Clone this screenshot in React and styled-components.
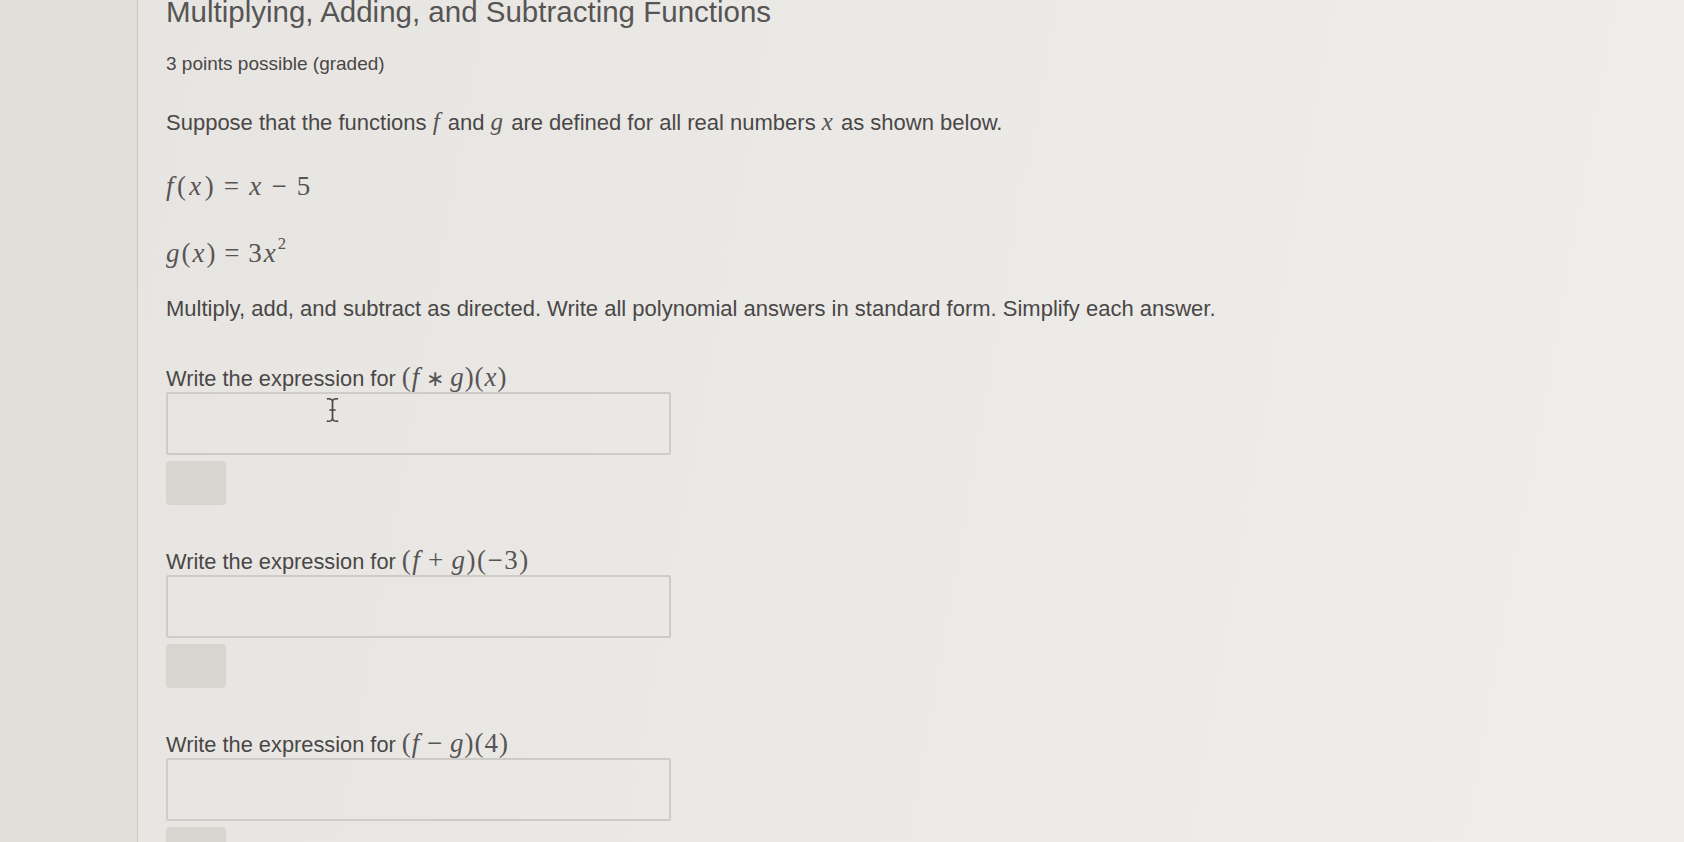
import React from "react";
import styled, { createGlobalStyle } from "styled-components";

const GlobalStyle = createGlobalStyle`
  html, body {
    margin: 0;
    padding: 0;
    height: 100%;
    overflow: hidden;
  }
  body {
    background: #e0ded9;
  }
`;

const Page = styled.div`
  display: flex;
  width: 1684px;
  height: 842px;
  overflow: hidden;
  font-family: "Liberation Sans", Arial, sans-serif;
`;

const Sidebar = styled.div`
  width: 137px;
  flex-shrink: 0;
  background: #e1dfda;
  border-right: 1px solid #cbc8c3;
`;

const Main = styled.div`
  flex: 1;
  padding-left: 28px;
  background: linear-gradient(100deg, #e7e5e1 0%, #eae9e6 45%, #efeeec 100%);
  color: #4a4747;
`;

const Title = styled.h1`
  margin: -3px 0 0;
  font-size: 29.5px;
  line-height: 30px;
  font-weight: 400;
  color: #575454;
  white-space: nowrap;
`;

const Points = styled.div`
  margin-top: 25px;
  font-size: 19px;
  line-height: 24px;
`;

const Para = styled.p`
  margin: ${(p) => p.$gap}px 0 0;
  font-size: 22px;
  line-height: 24px;
  white-space: nowrap;
`;

const Formula = styled.div`
  margin-top: ${(p) => p.$gap}px;
  height: 28px;
  line-height: 28px;
`;

const Math = styled.span`
  font-family: "Liberation Serif", "Times New Roman", serif;
  font-size: ${(p) => p.$size || 25}px;
  letter-spacing: ${(p) => p.$spacing ?? 2}px;
  color: #575454;
  white-space: nowrap;
`;

const V = styled.i`
  font-style: italic;
`;

const Op = styled.span`
  margin: 0 0.25em;
  font-size: ${(p) => (p.$small ? "0.8em" : "1em")};
`;

const Sup = styled.sup`
  font-size: 0.62em;
  vertical-align: 0.75em;
  line-height: 0;
`;

const Question = styled.div`
  margin-top: ${(p) => p.$gap}px;
  display: flex;
  flex-direction: column;
  align-items: flex-start;
`;

const Label = styled.div`
  height: 28px;
  line-height: 28px;
  font-size: 21.8px;
  white-space: nowrap;
`;

const FieldWrap = styled.div`
  position: relative;
  margin-top: 1px;
`;

const Field = styled.input`
  display: block;
  box-sizing: border-box;
  width: 505px;
  height: 63px;
  margin: 0;
  border: 2px solid #cfccc7;
  border-radius: 2px;
  background: transparent;
  outline: none;
`;

const Cursor = styled.svg`
  position: absolute;
  left: 159px;
  top: 5px;
  pointer-events: none;
`;

const Submit = styled.button`
  margin-top: 6px;
  width: 60px;
  height: 44px;
  border: none;
  border-radius: 4px;
  background: #d8d5d1;
`;

function Q({ gap, children, cursor }) {
  return (
    <Question $gap={gap}>
      <Label>
        Write the expression for {children}
      </Label>
      <FieldWrap>
        <Field type="text" aria-label="answer" />
        {cursor && (
          <Cursor width="15" height="26" viewBox="0 0 15 26" fill="none">
            <path
              d="M2.5 1.8 Q7.5 1.4 7.5 5 Q7.5 1.4 12.5 1.8 M7.5 5 V21 M2.5 24.2 Q7.5 24.6 7.5 21 Q7.5 24.6 12.5 24.2 M5 13 H10"
              stroke="#4a4747"
              strokeWidth="1.7"
              strokeLinecap="round"
            />
          </Cursor>
        )}
      </FieldWrap>
      <Submit type="button" aria-label="submit" />
    </Question>
  );
}

export default function App() {
  return (
    <>
      <GlobalStyle />
      <Page>
        <Sidebar />
        <Main>
          <Title>Multiplying, Adding, and Subtracting Functions</Title>
          <Points>3 points possible (graded)</Points>
          <Para $gap={34}>
            Suppose that the functions <Math><V>f</V></Math> and{" "}
            <Math><V>g</V></Math> are defined for all real numbers{" "}
            <Math><V>x</V></Math> as shown below.
          </Para>
          <Formula $gap={37}>
            <Math $size={27} $spacing={3.4}>
              <V>f</V>(<V>x</V>)<Op>=</Op><V>x</V><Op>−</Op>5
            </Math>
          </Formula>
          <Formula $gap={39}>
            <Math $size={27} $spacing={2}>
              <V>g</V>(<V>x</V>)<Op>=</Op>3<V>x</V>
              <Sup>2</Sup>
            </Math>
          </Formula>
          <Para $gap={30}>
            Multiply, add, and subtract as directed. Write all polynomial
            answers in standard form. Simplify each answer.
          </Para>
          <Q gap={42} cursor>
            <Math $size={27} $spacing={1}>
              (<V>f</V><Op $small>∗</Op><V>g</V>)(<V>x</V>)
            </Math>
          </Q>
          <Q gap={41}>
            <Math $size={27} $spacing={1.5}>
              (<V>f</V><Op>+</Op><V>g</V>)(−3)
            </Math>
          </Q>
          <Q gap={41}>
            <Math $size={27} $spacing={1}>
              (<V>f</V><Op>−</Op><V>g</V>)(4)
            </Math>
          </Q>
        </Main>
      </Page>
    </>
  );
}
